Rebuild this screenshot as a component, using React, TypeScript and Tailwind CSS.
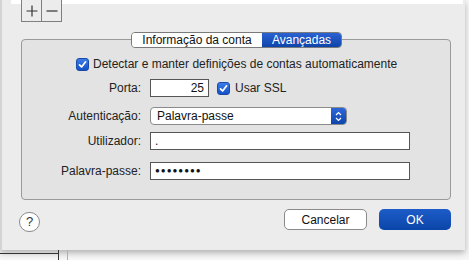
import React from 'react';

const font = "font-['Liberation_Sans',Arial,sans-serif]";

function Check() {
  return (
    <span className="w-[13px] h-[13px] rounded-[3px] bg-gradient-to-b from-[#3b7be8] to-[#1550c8] border border-[#1a4aa8] flex items-center justify-center shrink-0">
      <svg width="9" height="9" viewBox="0 0 9 9">
        <path d="M1.5 4.8 L3.6 7 L7.6 1.8" fill="none" stroke="white" strokeWidth={1.7} strokeLinecap="round" strokeLinejoin="round" />
      </svg>
    </span>
  );
}

function Row({ label, children, className }: { label: string; children: React.ReactNode; className: string }) {
  return (
    <div className={`flex items-center ${className}`}>
      <div className="w-[120px] text-right pr-[1px] text-[12px] text-[#222]">{label}</div>
      <div className="ml-[8px] flex items-center">{children}</div>
    </div>
  );
}

export default function App() {
  return (
    <div className={`w-[469px] h-[260px] bg-[#f6f6f6] overflow-hidden ${font}`}>
      <div className="w-[465px] h-[250px] bg-[#ececec] shadow-[inset_2px_0_0_#d4d4d4,0_3px_6px_rgba(0,0,0,0.28)] flex flex-col">
        {/* list + add/remove */}
        <div className="flex items-start h-[22px]">
          <div className="w-[11px]" />
          <div className="w-[10px] h-[4px] bg-white" />
          <div className="w-[41px] h-[22px] border border-t-0 border-[#7f7f7f] flex bg-[#ececec]">
            <div className="w-[20px] h-full border-r border-[#7f7f7f] flex items-center justify-center">
              <svg width="12" height="12" viewBox="0 0 12 12">
                <path d="M6 0.5 V11.5 M0.5 6 H11.5" stroke="#333" strokeWidth={1.2} />
              </svg>
            </div>
            <div className="flex-1 flex items-center justify-center">
              <svg width="12" height="12" viewBox="0 0 12 12">
                <path d="M0.5 6 H11.5" stroke="#333" strokeWidth={1.2} />
              </svg>
            </div>
          </div>
          <div className="w-[401px] h-[4px] bg-white" />
        </div>

        {/* group box */}
        <div className="ml-[21px] w-[430px] mt-[17px] h-[161px] border border-[#9a9a9a] rounded-[4px] bg-[#e3e3e3] flex flex-col">
          <div className="-mt-[8px] flex justify-center">
            <div className="flex h-[16px] text-[12px] leading-none rounded-[4px] overflow-hidden border border-[#7a7a7a] ml-[1px]">
              <div className="w-[130px] bg-white text-[#111] flex items-center justify-center">Informação da conta</div>
              <div className="w-[79px] bg-gradient-to-b from-[#2a62d3] to-[#0d44aa] text-white flex items-center justify-center">Avançadas</div>
            </div>
          </div>

          <div className="mt-[9px] ml-[54px] h-[14px] flex items-center gap-[3px] text-[12px] text-[#222]">
            <Check />
            <span className="ml-[1px]">Detectar e manter definições de contas automaticamente</span>
          </div>

          <Row label="Porta:" className="mt-[8px] h-[18px]">
            <div className="w-[59px] h-[18px] bg-white border border-[#555] flex items-center justify-end pr-[4px] text-[12px] text-[#111]">25</div>
            <div className="ml-[8px] flex items-center gap-[5px] text-[12px] text-[#222]">
              <Check />
              <span>Usar SSL</span>
            </div>
          </Row>

          <Row label="Autenticação:" className="mt-[10px] h-[18px]">
            <div className="w-[197px] h-[18px] bg-white border border-[#8a8a8a] rounded-[4px] flex items-center overflow-hidden">
              <span className="flex-1 pl-[6px] text-[12px] text-[#111]">Palavra-passe</span>
              <div className="w-[15px] h-full bg-gradient-to-b from-[#2d66d8] to-[#0c45ad] flex items-center justify-center">
                <svg width="7" height="11" viewBox="0 0 7 11">
                  <path d="M1 4 L3.5 1.5 L6 4 M1 7 L3.5 9.5 L6 7" fill="none" stroke="white" strokeWidth={1.2} />
                </svg>
              </div>
            </div>
          </Row>

          <Row label="Utilizador:" className="mt-[7px] h-[18px]">
            <div className="w-[260px] h-[18px] bg-white border border-[#555] flex items-center pl-[4px] text-[12px] text-[#111]">.</div>
          </Row>

          <Row label="Palavra-passe:" className="mt-[12px] h-[18px]">
            <div className="w-[260px] h-[18px] bg-white border border-[#555] flex items-center pl-[4px] text-[8px] tracking-[1px] text-[#111]">●●●●●●●●</div>
          </Row>
        </div>

        {/* buttons */}
        <div className="ml-[19px] w-[432px] mt-[9px] flex items-start">
          <div className="mt-[3px] w-[21px] h-[20px] rounded-full bg-white border border-[#8a8a8a] flex items-center justify-center text-[13px] text-[#333]">?</div>
          <div className="flex-1" />
          <button className="w-[83px] h-[21px] bg-white border border-[#8a8a8a] rounded-[5px] text-[12px] text-[#111] flex items-center justify-center">Cancelar</button>
          <button className="ml-[12px] w-[72px] h-[21px] rounded-[5px] bg-gradient-to-b from-[#1d5cc8] to-[#0a45a8] text-white text-[12px] flex items-center justify-center">OK</button>
        </div>
      </div>

      {/* background below window */}
      <div className="h-[10px] flex">
        <div className="w-[58px] h-[4px] border-b border-[#333]" />
        <div className="w-px h-full bg-[#333]" />
        <div className="w-[8px]" />
        <div className="w-px h-full bg-[#b0b0b0]" />
      </div>
    </div>
  );
}
